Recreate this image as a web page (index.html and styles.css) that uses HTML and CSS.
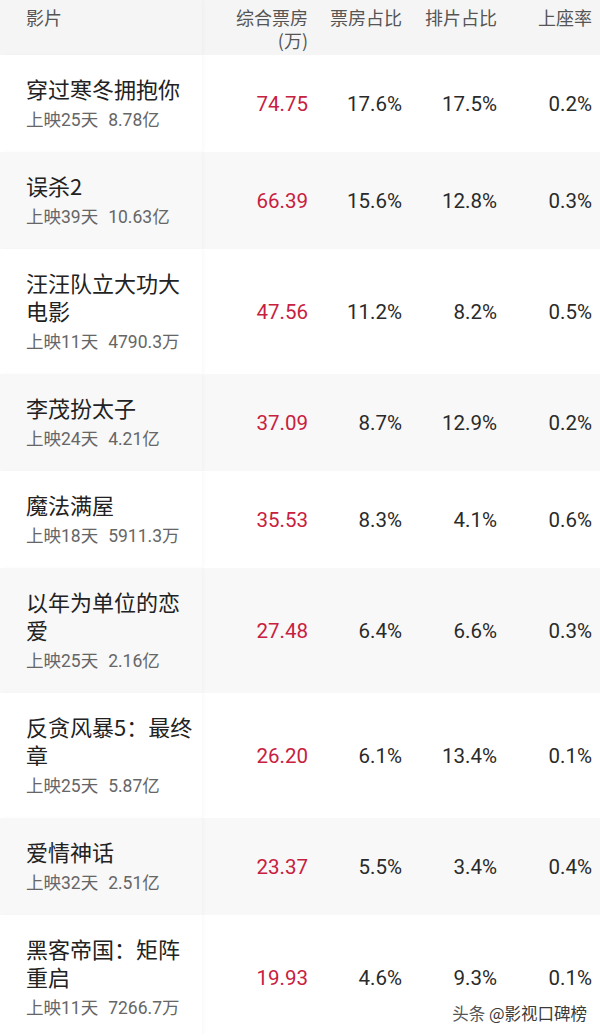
FILE: index.html
```html
<!DOCTYPE html>
<html lang="zh-CN">
<head>
<meta charset="utf-8">
<title>票房</title>
<link rel="stylesheet" href="styles.css">
</head>
<body>
<div class="table">
  <div class="row head">
    <div class="cell film">影片</div>
    <div class="cell num">综合票房<br>(万)</div>
    <div class="cell num">票房占比</div>
    <div class="cell num">排片占比</div>
    <div class="cell num">上座率</div>
  </div>

  <div class="row">
    <div class="cell film"><div class="title">穿过寒冬拥抱你</div><div class="sub">上映25天<span class="amt">8.78亿</span></div></div>
    <div class="cell num red">74.75</div><div class="cell num">17.6%</div><div class="cell num">17.5%</div><div class="cell num">0.2%</div>
  </div>
  <div class="row alt">
    <div class="cell film"><div class="title">误杀2</div><div class="sub">上映39天<span class="amt">10.63亿</span></div></div>
    <div class="cell num red">66.39</div><div class="cell num">15.6%</div><div class="cell num">12.8%</div><div class="cell num">0.3%</div>
  </div>
  <div class="row">
    <div class="cell film"><div class="title">汪汪队立大功大电影</div><div class="sub">上映11天<span class="amt">4790.3万</span></div></div>
    <div class="cell num red">47.56</div><div class="cell num">11.2%</div><div class="cell num">8.2%</div><div class="cell num">0.5%</div>
  </div>
  <div class="row alt">
    <div class="cell film"><div class="title">李茂扮太子</div><div class="sub">上映24天<span class="amt">4.21亿</span></div></div>
    <div class="cell num red">37.09</div><div class="cell num">8.7%</div><div class="cell num">12.9%</div><div class="cell num">0.2%</div>
  </div>
  <div class="row">
    <div class="cell film"><div class="title">魔法满屋</div><div class="sub">上映18天<span class="amt">5911.3万</span></div></div>
    <div class="cell num red">35.53</div><div class="cell num">8.3%</div><div class="cell num">4.1%</div><div class="cell num">0.6%</div>
  </div>
  <div class="row alt">
    <div class="cell film"><div class="title">以年为单位的恋爱</div><div class="sub">上映25天<span class="amt">2.16亿</span></div></div>
    <div class="cell num red">27.48</div><div class="cell num">6.4%</div><div class="cell num">6.6%</div><div class="cell num">0.3%</div>
  </div>
  <div class="row">
    <div class="cell film"><div class="title">反贪风暴5：最终章</div><div class="sub">上映25天<span class="amt">5.87亿</span></div></div>
    <div class="cell num red">26.20</div><div class="cell num">6.1%</div><div class="cell num">13.4%</div><div class="cell num">0.1%</div>
  </div>
  <div class="row alt">
    <div class="cell film"><div class="title">爱情神话</div><div class="sub">上映32天<span class="amt">2.51亿</span></div></div>
    <div class="cell num red">23.37</div><div class="cell num">5.5%</div><div class="cell num">3.4%</div><div class="cell num">0.4%</div>
  </div>
  <div class="row">
    <div class="cell film"><div class="title">黑客帝国：矩阵重启</div><div class="sub">上映11天<span class="amt">7266.7万</span></div></div>
    <div class="cell num red">19.93</div><div class="cell num">4.6%</div><div class="cell num">9.3%</div><div class="cell num">0.1%</div>
  </div>
</div>
<div class="watermark"><span class="wm-brand">头条</span> @影视口碑榜</div>
</body>
</html>
```

FILE: styles.css
```css
html, body {
  margin: 0;
  padding: 0;
  background: #ffffff;
}
body {
  width: 600px;
  height: 1034px;
  overflow: hidden;
  position: relative;
  font-family: Roboto, "Noto Sans CJK SC", sans-serif;
}
.table {
  display: flex;
  flex-direction: column;
}
.row {
  display: grid;
  grid-template-columns: 202px 106px 94px 95px 95px;
  padding-right: 8px;
  background: #ffffff;
  align-items: center;
}
.row.alt {
  background: #f8f8f8;
}
.row.head {
  background: #f5f5f5;
  height: 55px;
  align-items: start;
  color: #555555;
  font-family: "Noto Sans CJK SC", sans-serif;
  font-size: 18px;
  line-height: 23px;
}
.cell {
  min-width: 0;
}
.film {
  align-self: stretch;
  padding: 19px 6px 19px 26px;
  box-shadow: 2px 0 3px rgba(0, 0, 0, 0.025);
}
.head .cell {
  padding-top: 6px;
}
.head .film {
  padding-top: 6px;
  padding-bottom: 0;
}
.title {
  font-family: "Noto Sans CJK SC", sans-serif;
  font-size: 22px;
  line-height: 28px;
  color: #222222;
}
.sub {
  margin-top: 6px;
  font-family: Roboto, "Noto Sans CJK SC", sans-serif;
  font-size: 17.5px;
  line-height: 25px;
  color: #666666;
}
.amt {
  margin-left: 10px;
}
.num {
  text-align: right;
  font-size: 20.5px;
  color: #2a2a2a;
}
.head .num {
  font-size: 18px;
  color: #555555;
}
.red {
  color: #c8203f;
}
.watermark {
  position: absolute;
  right: 13px;
  top: 1001px;
  font-family: "Noto Sans CJK SC", sans-serif;
  font-size: 16.5px;
  color: #3a3a3a;
  text-shadow: 0 0 2px #ffffff, 0 0 2px #ffffff;
}
.wm-brand {
  color: #555555;
}
```
